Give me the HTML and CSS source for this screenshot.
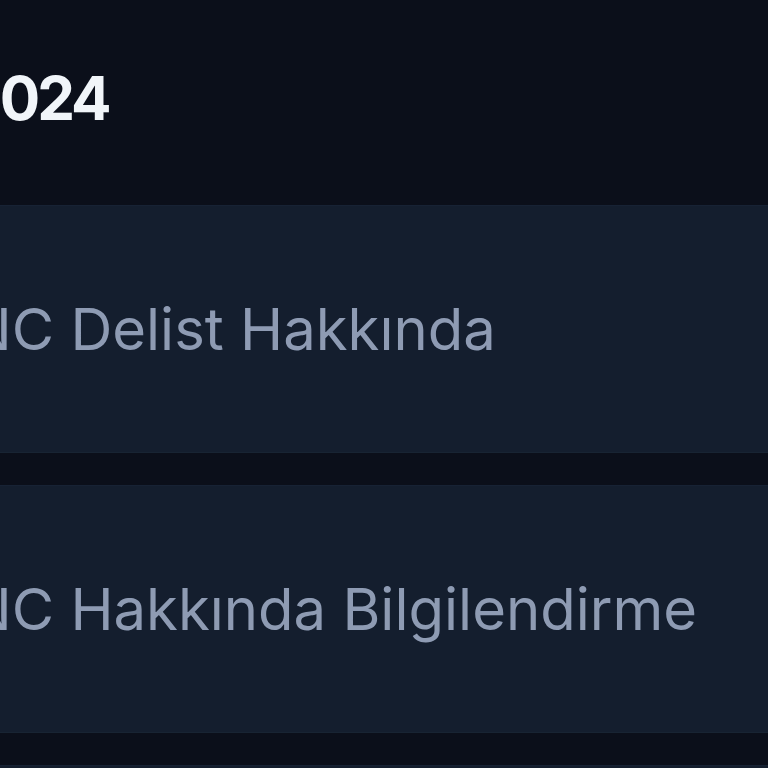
FILE: index.html
```html
<!DOCTYPE html>
<html lang="tr">
<head>
<meta charset="utf-8">
<title>Duyurular</title>
<link rel="stylesheet" href="styles.css">
</head>
<body>
<main class="page">
  <h1 class="year">2024</h1>
  <ul class="list">
    <li class="card"><span class="title">NC Delist Hakkında</span></li>
    <li class="card"><span class="title">NC Hakkında Bilgilendirme</span></li>
    <li class="card"><span class="title">NC Duyuru</span></li>
  </ul>
</main>
</body>
</html>
```
FILE: styles.css
```css
html, body {
  margin: 0;
  padding: 0;
  background: #0b0f1a;
  overflow: hidden;
  height: 768px;
}
body {
  font-family: Inter, "Noto Sans", sans-serif;
}
.page {
  margin-left: -40px;
  width: calc(100% + 80px);
  display: flex;
  flex-direction: column;
  padding-top: 68px;
}
.year {
  margin: 0;
  font-size: 60px;
  line-height: 1;
  font-weight: 700;
  color: #f1f5f9;
  letter-spacing: -0.05em;
  padding-left: 5px;
}
.list {
  list-style: none;
  margin: 77px 0 0;
  padding: 0;
  display: flex;
  flex-direction: column;
  gap: 32px;
}
.card {
  height: 248px;
  box-sizing: border-box;
  background: #141e2e;
  border-top: 1px solid #172234;
  border-bottom: 1px solid #182433;
  display: flex;
  align-items: center;
  padding-left: 8px;
}
.title {
  font-size: 58px;
  color: #8e9bb3;
  white-space: nowrap;
}
```
